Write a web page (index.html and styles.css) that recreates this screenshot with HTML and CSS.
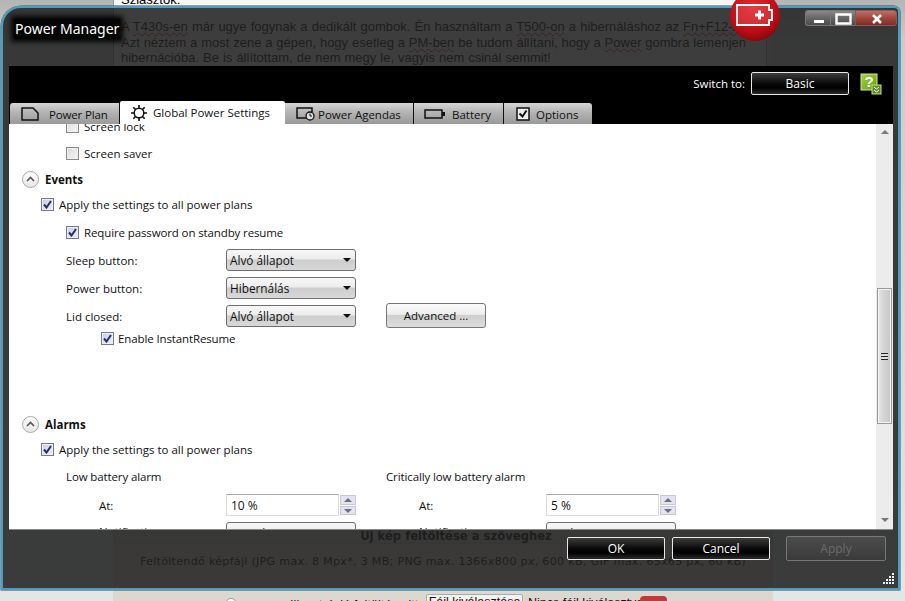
FILE: index.html
```html
<!DOCTYPE html>
<html lang="hu">
<head>
<meta charset="utf-8">
<title>Power Manager</title>
<link rel="stylesheet" href="styles.css">
</head>
<body>
<div class="page">
  <div class="page-side"></div>
  <div class="page-main">
    <div class="article">
      <p class="greet">Sziasztok:</p>
      <p class="line line-first">A <span class="wavy">T430s-en</span> már ugye fogynak a dedikált gombok. Én használtam a <span class="wavy">T500-on</span> a hibernáláshoz az <span class="wavy">Fn+F12-t.</span></p>
      <p class="line line-just">Azt néztem a most zene a gépen, hogy esetleg a <span class="wavy">PM-ben</span> be tudom állítani, hogy a <span class="wavy">Power</span> gombra lemenjen</p>
      <p class="line line-last">hibernációba. Be is állítottam, de nem megy le, vagyis nem csinál semmit!</p>
    </div>
    <div class="upload">
      <div class="upload-head">Új kép feltöltése a szöveghez</div>
      <p class="upload-note">Feltöltendő képfájl (JPG max. 8 Mpx*, 3 MB; PNG max. 1366x800 px, 600 kB; GIF max. 65x65 px, 60 kB)</p>
    </div>
    <div class="file-row">
      <span class="radio"></span>
      <span class="file-label">Illusztráció feltöltése itt:</span>
      <span class="file-btn">Fájl kiválasztása</span>
      <span class="file-none">Nincs fájl kiválasztva</span>
      <span class="file-red"></span>
    </div>
  </div>
</div>

<div class="orb">
  <svg viewBox="0 0 50 41" width="50" height="41">
    <defs>
      <radialGradient id="orbg" cx="0.45" cy="0.3" r="0.8">
        <stop offset="0" stop-color="#e8262e"/>
        <stop offset="0.65" stop-color="#b90d16"/>
        <stop offset="1" stop-color="#6d0509"/>
      </radialGradient>
    </defs>
    <circle cx="25" cy="16" r="25" fill="url(#orbg)"/>
    <path d="M7 5h32v5h3v10h-3v5H7z" fill="#e9656b" fill-opacity=".35" stroke="#fff" stroke-width="1.800"/>
    <path d="M25 15h9M29.500 10.500v9" stroke="#fff" stroke-width="3"/>
  </svg>
</div>

<div class="window">
  <div class="titlebar">
    <div class="title">Power Manager</div>
    <div class="controls">
      <span class="ctl ctl-min"><svg viewBox="0 0 26 16" width="26" height="16"><rect x="8" y="9" width="10" height="3" fill="#fff"/></svg></span>
      <span class="ctl ctl-max"><svg viewBox="0 0 26 16" width="26" height="16"><path d="M5.500 3.500h14v9h-14z" fill="none" stroke="#fff" stroke-width="2.400"/></svg></span>
      <span class="ctl ctl-close"><svg viewBox="0 0 42 16" width="42" height="16"><path d="M17 4l8 8M25 4l-8 8" stroke="#fff" stroke-width="2.600"/></svg></span>
    </div>
  </div>

  <div class="header">
    <div class="switch">
      <span class="switch-label">Switch to:</span>
      <span class="btn-black btn-basic">Basic</span>
      <svg class="help" viewBox="0 0 22 22" width="22" height="22">
        <defs>
          <linearGradient id="helpg" x1="0" y1="0" x2="1" y2="1">
            <stop offset="0" stop-color="#a9d63a"/>
            <stop offset="1" stop-color="#5f9a16"/>
          </linearGradient>
        </defs>
        <rect x="1" y="1" width="16" height="16" fill="url(#helpg)" stroke="#d3e89a"/>
        <text x="9" y="14" class="help-q">?</text>
        <rect x="12" y="12" width="9" height="9" fill="#5d8f1a" stroke="#c6e08a"/>
        <path d="M14 14l2.500 2 2.500-2M14 17l2.500 2 2.500-2" stroke="#fff" fill="none"/>
      </svg>
    </div>
    <div class="tabs">
      <div class="tab tab-plan">
        <svg viewBox="0 0 18 14" width="18" height="14"><path d="M1 1h11l5 5v7H1z" fill="none" stroke="#111" stroke-width="1.500"/></svg>
        <span>Power Plan</span>
      </div>
      <div class="tab tab-active">
        <svg viewBox="0 0 16 16" width="16" height="16"><circle cx="8" cy="8" r="4.800" fill="none" stroke="#111" stroke-width="1.500"/><path d="M8 0v3M8 13v3M0 8h3M13 8h3M2.300 2.300l2.200 2.200M11.500 11.500l2.200 2.200M2.300 13.700l2.200-2.200M11.500 4.500l2.200-2.200" stroke="#111" stroke-width="1.600"/></svg>
        <span>Global Power Settings</span>
      </div>
      <div class="tab tab-agenda">
        <svg viewBox="0 0 20 14" width="20" height="14"><path d="M11 11H1V1h15v4" fill="none" stroke="#111" stroke-width="1.500"/><circle cx="14" cy="9" r="4" fill="#ddd" stroke="#111" stroke-width="1.300"/><path d="M14 6.500V9h2" stroke="#111" fill="none"/></svg>
        <span>Power Agendas</span>
      </div>
      <div class="tab tab-battery">
        <svg viewBox="0 0 21 10" width="21" height="10"><path d="M1 1h17v8H1z" fill="none" stroke="#111" stroke-width="1.500"/><rect x="18" y="3" width="3" height="4" fill="#111"/></svg>
        <span>Battery</span>
      </div>
      <div class="tab tab-options">
        <svg viewBox="0 0 14 14" width="14" height="14"><path d="M1 1h12v12H1z" fill="#eee" stroke="#111" stroke-width="1.500"/><path d="M3.500 6.500l3 3 4-6" fill="none" stroke="#111" stroke-width="2"/></svg>
        <span>Options</span>
      </div>
    </div>
  </div>

  <div class="panel">
    <div class="content">
      <div class="scroller">
        <label class="row row-sub r-lock"><span class="cb"></span>Screen lock</label>
        <label class="row row-sub r-saver"><span class="cb"></span>Screen saver</label>

        <div class="row section r-events"><span class="toggle"><svg viewBox="0 0 9 6" width="9" height="6"><path d="M1 5l3.500-3.500L8 5" fill="none" stroke="#555" stroke-width="1.600"/></svg></span>Events</div>
        <label class="row row-top r-apply"><span class="cb cb-on"><svg viewBox="0 0 9 9" width="9" height="9"><path d="M1 4.500l2.500 3L8 1" fill="none" stroke="#23306e" stroke-width="2"/></svg></span>Apply the settings to all power plans</label>
        <label class="row row-sub r-req tight"><span class="cb cb-on"><svg viewBox="0 0 9 9" width="9" height="9"><path d="M1 4.500l2.500 3L8 1" fill="none" stroke="#23306e" stroke-width="2"/></svg></span>Require password on standby resume</label>

        <div class="row row-field r-sleep"><span class="lbl">Sleep button:</span><span class="select">Alvó állapot</span></div>
        <div class="row row-field r-power"><span class="lbl">Power button:</span><span class="select">Hibernálás</span></div>
        <div class="row row-field r-lid"><span class="lbl">Lid closed:</span><span class="select">Alvó állapot</span><span class="advanced">Advanced ...</span></div>
        <label class="row row-deep r-instant tight"><span class="cb cb-on"><svg viewBox="0 0 9 9" width="9" height="9"><path d="M1 4.500l2.500 3L8 1" fill="none" stroke="#23306e" stroke-width="2"/></svg></span>Enable InstantResume</label>

        <div class="row section r-alarms"><span class="toggle"><svg viewBox="0 0 9 6" width="9" height="6"><path d="M1 5l3.500-3.500L8 5" fill="none" stroke="#555" stroke-width="1.600"/></svg></span>Alarms</div>
        <label class="row row-top r-apply2"><span class="cb cb-on"><svg viewBox="0 0 9 9" width="9" height="9"><path d="M1 4.500l2.500 3L8 1" fill="none" stroke="#23306e" stroke-width="2"/></svg></span>Apply the settings to all power plans</label>

        <div class="alarm-grid">
          <div class="alarm-col">
            <div class="alarm-title tight">Low battery alarm</div>
            <div class="alarm-row"><span class="alarm-lbl">At:</span><span class="spin-input">10 %</span><span class="spinner"><i class="up"></i><i class="down"></i></span></div>
            <div class="alarm-row alarm-notify"><span class="alarm-lbl">Notification:</span><span class="select">Sound</span></div>
          </div>
          <div class="alarm-col">
            <div class="alarm-title tight">Critically low battery alarm</div>
            <div class="alarm-row"><span class="alarm-lbl">At:</span><span class="spin-input">5 %</span><span class="spinner"><i class="up"></i><i class="down"></i></span></div>
            <div class="alarm-row alarm-notify"><span class="alarm-lbl">Notification:</span><span class="select">Nothing</span></div>
          </div>
        </div>
      </div>
      <div class="scrollbar">
        <i class="sb-up"></i>
        <div class="sb-thumb"><span class="sb-grip"></span></div>
        <i class="sb-down"></i>
      </div>
    </div>
    <div class="footer">
      <span class="btn-black btn-ok">OK</span>
      <span class="btn-black btn-cancel">Cancel</span>
      <span class="btn-apply">Apply</span>
      <svg class="grip" viewBox="0 0 12 12" width="12" height="12">
        <path d="M9 0h2v2H9zM6 3h2v2H6zM9 3h2v2H9zM3 6h2v2H3zM6 6h2v2H6zM9 6h2v2H9zM0 9h2v2H0zM3 9h2v2H3zM6 9h2v2H6zM9 9h2v2H9z" fill="#eef0f0"/>
      </svg>
    </div>
  </div>
</div>
</body>
</html>
```
FILE: styles.css
```css
* { box-sizing: border-box; }
html, body { margin: 0; padding: 0; }
body {
  width: 905px;
  height: 601px;
  overflow: hidden;
  position: relative;
  background: linear-gradient(#b4b6b6 0, #c9cccc 40px, #e2e6e6 100%);
  font-family: "Open Sans", "Noto Sans", sans-serif;
  font-size: 11.5px;
  color: #111;
}

/* Background page */
.page { display: flex; height: 601px; }
.page-side { width: 113px; flex: none; }
.page-main {
  width: 660px;
  flex: none;
  display: flex;
  flex-direction: column;
  background: #dcd8cf;
}
.article {
  height: 528px;
  flex: none;
  margin-right: 6px;
  background: #f8f7f3;
  border-left: 1px solid #9a9a9a;
  border-right: 1px solid #a8a8a8;
  padding: 0 20px 0 7px;
  font-family: "Liberation Sans", Arial, sans-serif;
  font-size: 13px;
  line-height: 15.5px;
  color: #000;
}
.greet { margin: -8px 0 0; height: 27px; }
.line { margin: 0; white-space: nowrap; }
.line-first { word-spacing: .5px; }
.line-last { word-spacing: .4px; }
.line-just { white-space: normal; text-align: justify; text-align-last: justify; }
.wavy { text-decoration: underline wavy #c02020 1px; text-underline-offset: 1px; }
.upload { height: 66px; flex: none; font-family: "DejaVu Sans", Verdana, sans-serif; color: #000; }
.upload-head {
  height: 16px;
  padding-left: 26px;
  text-align: center;
  font-weight: bold;
  font-size: 11.600px;
  line-height: 16px;
  background: #cfcbc2;
  border-bottom: 1px solid #bbb;
}
.upload-note {
  margin: 10px 0 0 27px;
  font-size: 11.200px;
  line-height: 15px;
  white-space: nowrap;
  letter-spacing: .24px;
}
.file-row {
  display: flex;
  align-items: flex-start;
  font-family: "Liberation Sans", Arial, sans-serif;
  font-size: 12.500px;
  padding-left: 112px;
  white-space: nowrap;
}
.radio { width: 12px; height: 12px; border: 1px solid #999; border-radius: 50%; background: #fff; flex: none; margin-top: 4px; }
.file-label { margin-left: 53px; width: 136px; flex: none; padding-top: 4px; letter-spacing: .1px; }
.file-btn { width: 97px; height: 20px; border: 1px solid #aaa; background: #f2f2f2; border-radius: 2px; text-align: center; flex: none; }
.file-none { margin-left: 5px; width: 112px; flex: none; padding-top: 2px; }
.file-red { width: 27px; height: 14px; margin-top: 2px; background: #c43a3a; border-radius: 4px; flex: none; }

/* Orb */
.orb { position: absolute; left: 730px; top: 0; width: 50px; height: 41px; z-index: 5; }
.orb svg { display: block; }

/* Window */
.window {
  position: absolute;
  left: 1px;
  top: 6px;
  width: 899px;
  height: 584px;
  border: 2px solid #4b9dc2;
  border-radius: 20px 6px 0 0;
  background: rgba(34, 34, 34, .875);
  display: flex;
  flex-direction: column;
  box-shadow: 0 0 0 .5px #33505e;
}
.titlebar {
  height: 58px;
  flex: none;
  position: relative;
  display: flex;
  justify-content: space-between;
  align-items: flex-start;
  padding: 2px 1px 0 11px;
}
.title {
  margin-top: 9px;
  font-family: "Noto Sans", "Open Sans", sans-serif;
  font-size: 14px;
  line-height: 20px;
  color: #fff;
  padding: 0 1px;
  background: rgba(0, 0, 0, .92);
  box-shadow: 0 0 5px 3px rgba(0, 0, 0, .92);
}
.controls { display: flex; gap: 0; }
.ctl { display: block; height: 16px; }
.ctl svg { display: block; }
.ctl-min, .ctl-max { width: 25px; background: linear-gradient(#8a8a8a, #666 50%, #4a4a4a); border: 1px solid #777; border-right-width: 0; }
.ctl-min { border-radius: 3px 0 0 3px; }
.ctl-close { width: 42px; background: linear-gradient(#bd6f69, #a2443d 50%, #7d2e2a); border: 1px solid #8a5a55; border-radius: 0 3px 3px 0; }

.header {
  height: 58px;
  flex: none;
  margin: 0 5px 0 6px;
  background: #000;
  display: flex;
  flex-direction: column;
  justify-content: space-between;
}
.switch {
  display: flex;
  align-items: center;
  justify-content: flex-end;
  padding: 6px 11px 0 0;
  color: #fff;
  font-size: 12px;
}
.switch-label { margin-right: 6px; font-size: 11.500px; }
.btn-black {
  display: flex;
  align-items: center;
  justify-content: center;
  width: 98px;
  height: 23px;
  color: #fff;
  font-size: 12px;
  background: linear-gradient(#3c3c3c, #0a0a0a 50%, #000 70%, #2a2a2a);
  border: 1px solid #e8e8e8;
  border-radius: 2px;
}
.help { margin-left: 11px; display: block; }
.help-q { font: bold 15px "Liberation Sans", Arial, sans-serif; fill: #fff; text-anchor: middle; }

.tabs { display: flex; align-items: flex-end; padding-left: 1px; }
.tab {
  height: 21px;
  display: flex;
  align-items: center;
  background: linear-gradient(#d5d5d5, #b3b3b3 45%, #9a9a9a);
  border-right: 1px solid #111;
  color: #111;
  font-size: 11.500px;
  flex: none;
}
.tab svg { display: block; flex: none; }
.tab span { display: block; padding-top: 2px; }
.tab-plan { width: 110px; padding-left: 11px; gap: 10px; border-radius: 3px 0 0 0; letter-spacing: -.15px; }
.tab-active { width: 165px; height: 23px; background: #fff; border: 0; border-radius: 2px 2px 0 0; padding-left: 11px; gap: 6px; }
.tab-active span { padding-top: 0; }
.tab-agenda { width: 129px; padding-left: 11px; gap: 2px; }
.tab-battery { width: 90px; padding-left: 10px; gap: 7px; }
.tab-options { width: 88px; padding-left: 12px; gap: 6px; border-right: 0; border-radius: 0 3px 0 0; }

.panel { flex: 1; min-height: 0; display: flex; flex-direction: column; }
.content {
  height: 406px;
  flex: none;
  margin: 0 5px 0 6px;
  background: #fff;
  display: flex;
  border-bottom: 1px solid #888;
  overflow: hidden;
}
.scroller { flex: 1; min-width: 0; overflow: hidden; }

.row { display: flex; align-items: center; height: 18px; white-space: nowrap; }
.tight { letter-spacing: -.12px; }
.row-sub { padding-left: 57px; }
.row-top { padding-left: 32px; }
.row-field { padding-left: 57px; }
.row-deep { padding-left: 92px; }
.row-deep .cb { margin-right: 4px; }
.r-lock { margin-top: -7px; }
.r-saver { margin-top: 9px; }
.r-events { margin-top: 8px; }
.r-apply { margin-top: 7px; }
.r-req { margin-top: 10px; }
.r-sleep { margin-top: 10px; height: 18px; }
.r-power { margin-top: 10px; }
.r-lid { margin-top: 10px; }
.r-instant { margin-top: 4px; }
.r-alarms { margin-top: 68px; }
.r-apply2 { margin-top: 7px; }

.cb {
  width: 13px;
  height: 13px;
  flex: none;
  margin-right: 5px;
  border: 1px solid #8b8b8b;
  background: linear-gradient(135deg, #d8d8d8, #f7f7f7);
  box-shadow: inset 0 0 0 1px #eee;
  display: flex;
  align-items: center;
  justify-content: center;
}
.cb-on { background: linear-gradient(135deg, #c9cde4, #eef0fa); border-color: #77798f; }
.cb svg { display: block; }

.section { padding-left: 13px; font-weight: 700; font-family: "Open Sans", sans-serif; }
.toggle {
  width: 17px;
  height: 17px;
  flex: none;
  margin-right: 6px;
  border: 1px solid #a8a8a8;
  border-radius: 50%;
  background: linear-gradient(#fff, #e6e6e6);
  display: flex;
  align-items: center;
  justify-content: center;
}
.toggle svg { display: block; }

.lbl { width: 160px; flex: none; }
.select {
  width: 130px;
  height: 22px;
  flex: none;
  position: relative;
  padding: 0 0 0 3px;
  line-height: 21px;
  font-size: 11.800px;
  border: 1px solid #6f6f6f;
  border-radius: 3px;
  background: linear-gradient(#f8f8f8, #ececec 45%, #cdcdcd 50%, #d8d8d8);
}
.select::after {
  content: "";
  position: absolute;
  right: 4px;
  top: 8px;
  border-style: solid;
  border-width: 4px 4px 0;
  border-color: #111 transparent transparent;
}
.advanced {
  width: 100px;
  height: 25px;
  flex: none;
  margin: -2px 0 0 30px;
  text-align: center;
  line-height: 24px;
  font-size: 11.500px;
  border: 1px solid #777;
  border-radius: 3px;
  background: linear-gradient(#fbfbfb, #ededed 45%, #cfcfcf 50%, #dcdcdc);
}

.alarm-grid { display: grid; grid-template-columns: 320px 320px; padding-left: 57px; margin-top: 10px; }
.alarm-title { height: 18px; line-height: 18px; }
.alarm-row { display: flex; align-items: center; height: 22px; margin-top: 8px; }
.alarm-lbl { width: 160px; padding-left: 33px; flex: none; }
.alarm-notify .alarm-lbl { margin-top: -3px; }
.alarm-notify .select { line-height: 21px; }
.spin-input {
  width: 113px;
  height: 22px;
  flex: none;
  padding-left: 4px;
  line-height: 22px;
  font-size: 12px;
  border: 1px solid #dcdcdc;
  border-top-color: #ababab;
}
.spinner { width: 16px; height: 20px; margin-left: 1px; flex: none; display: flex; flex-direction: column; gap: 1px; }
.spinner i { display: block; flex: 1; background: #e4e4ee; border: 1px solid #c8c8d0; position: relative; }
.spinner i::after {
  content: "";
  position: absolute;
  left: 3px;
  top: 2px;
  border-style: solid;
  border-color: transparent;
  border-width: 0 4px 4px;
  border-bottom-color: #6a6f8a;
}
.spinner i.down::after { border-width: 4px 4px 0; border-top-color: #6a6f8a; border-bottom-color: transparent; }
.alarm-notify { margin-top: 6px; }

.scrollbar {
  width: 17px;
  flex: none;
  background: #ececec;
  display: flex;
  flex-direction: column;
  align-items: center;
  position: relative;
}
.sb-up, .sb-down { display: block; width: 0; height: 0; border-style: solid; border-color: transparent; }
.sb-up { margin-top: 6px; border-width: 0 4px 4px; border-bottom-color: #777; }
.sb-down { margin-top: 94px; border-width: 4px 4px 0; border-top-color: #777; }
.sb-thumb {
  width: 15px;
  height: 136px;
  margin-top: 154px;
  border: 1px solid #9a9a9a;
  background: linear-gradient(90deg, #e6e6e6, #d6d6d6 40%, #c6c6c6);
  box-shadow: inset 0 0 0 1px #f4f4f4;
  display: flex;
  align-items: center;
  justify-content: center;
}
.sb-grip {
  display: block;
  width: 7px;
  height: 7px;
  background: repeating-linear-gradient(#222 0, #222 1px, #ddd 1px, #ddd 3px);
}

.footer {
  flex: 1;
  min-height: 0;
  position: relative;
  display: flex;
  align-items: flex-start;
  padding: 7px 0 0 564px;
}
.btn-cancel { margin-left: 7px; }
.btn-apply {
  margin: -1px 0 0 16px;
  width: 100px;
  height: 25px;
  display: flex;
  align-items: center;
  justify-content: center;
  color: #6b6b6b;
  font-size: 12px;
  border: 1px solid #777;
  border-radius: 2px;
  background: linear-gradient(#4c4c4c, #3a3a3a);
}
.grip { position: absolute; right: 3px; bottom: 3px; display: block; }
```
